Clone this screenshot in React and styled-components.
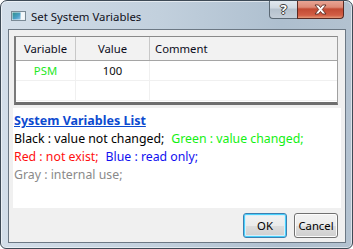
import React from "react";
import styled, { createGlobalStyle } from "styled-components";

const GlobalStyle = createGlobalStyle`
  html, body { margin: 0; padding: 0; background: #ffffff; }
  body { font-family: "Noto Sans", "DejaVu Sans", sans-serif; }
`;

const FONT = `"Noto Sans", "DejaVu Sans", sans-serif`;

const rows = [
  { name: "PSM", value: "100", comment: "", color: "#1ee81e" },
  { name: "", value: "", comment: "" },
];

export default function App() {
  return (
    <>
      <GlobalStyle />
      <Window>
        <TitleBar>
          <TitleLeft>
            <AppIcon />
            <Title>Set System Variables</Title>
          </TitleLeft>
          <Caption>
            <HelpButton>?</HelpButton>
            <CloseButton>
              <CloseGlyph />
            </CloseButton>
          </Caption>
        </TitleBar>
        <Client>
          <Grid>
            <HeaderRow>
              <HeadCell $w={60} $center>Variable</HeadCell>
              <HeadCell $w={74} $center>Value</HeadCell>
              <HeadCell $last>Comment</HeadCell>
            </HeaderRow>
            {rows.map((r, i) => (
              <BodyRow key={i}>
                <Cell $w={60} $center $color={r.color}>{r.name}</Cell>
                <Cell $w={74} $center>{r.value}</Cell>
                <Cell $last>{r.comment}</Cell>
              </BodyRow>
            ))}
          </Grid>
          <Legend>
            <LegendTitle>System Variables List</LegendTitle>
            <LegendLine>
              <Swatch $color="#000000">Black : value not changed;</Swatch>
              <Swatch $color="#12f012">Green : value changed;</Swatch>
            </LegendLine>
            <LegendLine>
              <Swatch $color="#ff1010">Red : not exist;</Swatch>
              <Swatch $color="#1010f0">Blue : read only;</Swatch>
            </LegendLine>
            <LegendLine>
              <Swatch $color="#8a8a8a">Gray : internal use;</Swatch>
            </LegendLine>
          </Legend>
          <ButtonRow>
            <DialogButton $default>OK</DialogButton>
            <DialogButton>Cancel</DialogButton>
          </ButtonRow>
        </Client>
      </Window>
    </>
  );
}

function AppIcon() {
  return (
    <IconBox width="15" height="10" viewBox="0 0 15 10">
      <defs>
        <linearGradient id="ic" x1="0" x2="1" y1="0" y2="1">
          <stop offset="0" stopColor="#2f8f8a" />
          <stop offset="0.6" stopColor="#4aa0c8" />
          <stop offset="1" stopColor="#8fc4e8" />
        </linearGradient>
      </defs>
      <rect x="0.5" y="0.5" width="14" height="9" fill="#e8eef2" stroke="#7a8a96" />
      <rect x="1.5" y="1.5" width="8" height="7" fill="url(#ic)" />
      <rect x="10" y="1.5" width="3.5" height="7" fill="#f4f8fb" />
    </IconBox>
  );
}

function CloseGlyph() {
  return (
    <svg width="13" height="11" viewBox="0 0 13 11">
      <path
        d="M1 1 H4.5 L6.5 3.5 L8.5 1 H12 L8.3 5.5 L12 10 H8.5 L6.5 7.5 L4.5 10 H1 L4.7 5.5 Z"
        fill="#ffffff"
        stroke="#5a2a22"
        strokeWidth="0.9"
        strokeLinejoin="round"
      />
    </svg>
  );
}

const Window = styled.div`
  width: 353px;
  height: 249px;
  box-sizing: border-box;
  border: 1px solid #3e4a56;
  border-radius: 7px 7px 6px 6px;
  background: linear-gradient(to right, #d3dee9 0%, #c2d0dd 45%, #aebfcf 80%, #b3c2d0 100%);
  box-shadow: inset 0 0 0 1px rgba(255, 255, 255, 0.55);
  display: flex;
  flex-direction: column;
  overflow: hidden;
`;

const TitleBar = styled.div`
  height: 28px;
  flex: none;
  display: flex;
  align-items: flex-start;
`;

const TitleLeft = styled.div`
  display: flex;
  align-items: center;
  height: 28px;
  padding-left: 10px;
  padding-top: 2px;
  box-sizing: border-box;
`;

const IconBox = styled.svg`
  display: block;
  margin-right: 5px;
`;

const Title = styled.span`
  font-family: ${FONT};
  font-size: 11.4px;
  color: #101020;
  white-space: nowrap;
`;

const Caption = styled.div`
  margin-left: auto;
  margin-right: 8px;
  display: flex;
  height: 19px;
  margin-top: -1px;
`;

const HelpButton = styled.div`
  width: 28px;
  height: 19px;
  box-sizing: border-box;
  border: 1px solid #5b6874;
  border-top: none;
  border-right: none;
  border-radius: 0 0 0 4px;
  background: linear-gradient(#e4eaf0 0%, #cfd8e1 45%, #b5c1cd 50%, #c4ced8 100%);
  display: flex;
  align-items: center;
  justify-content: center;
  font-family: ${FONT};
  font-weight: bold;
  font-size: 13px;
  color: #ffffff;
  text-shadow: 0 0 1px #333, 1px 0 0 #444, -1px 0 0 #444, 0 1px 0 #444, 0 -1px 0 #444;
`;

const CloseButton = styled.div`
  width: 47px;
  height: 19px;
  box-sizing: border-box;
  border: 1px solid #5a2a22;
  border-top: none;
  border-radius: 0 0 4px 0;
  background: linear-gradient(#e9a899 0%, #dd8a76 40%, #c24a33 50%, #d25e45 85%, #e49a7a 100%);
  display: flex;
  align-items: center;
  justify-content: center;
`;

const Client = styled.div`
  flex: 1;
  margin: 0 6px 5px 7px;
  border: 1px solid #6c7884;
  background: #f0f0f0;
  display: flex;
  flex-direction: column;
`;

const Grid = styled.div`
  margin: 6px 7px 0 5px;
  height: 69px;
  box-sizing: border-box;
  border-top: 1px solid #8a8a8a;
  border-left: 2px solid #7a7a7a;
  border-bottom: 3px solid #6e6e6e;
  border-right: 1px solid #a0a0a0;
  background: #ffffff;
  display: flex;
  flex-direction: column;
`;

const HeaderRow = styled.div`
  display: flex;
  height: 24px;
  flex: none;
  background: #f2f2f2;
  border-bottom: 1px solid #a5a5a5;
  box-sizing: border-box;
`;

const HeadCell = styled.div`
  ${(p) => (p.$w ? `width: ${p.$w}px; flex: none;` : "flex: 1;")}
  box-sizing: border-box;
  border-right: ${(p) => (p.$last ? "none" : "1px solid #c8c8c8")};
  display: flex;
  align-items: center;
  justify-content: ${(p) => (p.$center ? "center" : "flex-start")};
  padding-left: ${(p) => (p.$center ? "0" : "5px")};
  font-family: ${FONT};
  font-size: 11.3px;
  color: #0c0c1c;
`;

const BodyRow = styled.div`
  display: flex;
  height: 20px;
  flex: none;
  border-bottom: 1px solid #f0f0f0;
  box-sizing: border-box;
`;

const Cell = styled.div`
  ${(p) => (p.$w ? `width: ${p.$w}px; flex: none;` : "flex: 1;")}
  box-sizing: border-box;
  border-right: ${(p) => (p.$last ? "none" : "1px solid #f0f0f0")};
  display: flex;
  align-items: center;
  justify-content: ${(p) => (p.$center ? "center" : "flex-start")};
  font-family: ${FONT};
  font-size: 11.3px;
  color: ${(p) => p.$color || "#0c0c0c"};
`;

const Legend = styled.div`
  margin: 3px 4px 0 4px;
  height: 100px;
  box-sizing: border-box;
  background: #ffffff;
  padding: 4px 0 0 1px;
  display: flex;
  flex-direction: column;
`;

const LegendTitle = styled.div`
  font-family: ${FONT};
  font-size: 12.5px;
  font-weight: bold;
  line-height: 18px;
  color: #0c4ad0;
  text-decoration: underline;
  white-space: nowrap;
`;

const LegendLine = styled.div`
  display: flex;
  gap: 7px;
  font-family: ${FONT};
  font-size: 12.3px;
  line-height: 18px;
  white-space: nowrap;
`;

const Swatch = styled.span`
  color: ${(p) => p.$color};
`;

const ButtonRow = styled.div`
  display: flex;
  justify-content: flex-end;
  gap: 7px;
  margin: 5px 7px 0 0;
`;

const DialogButton = styled.div`
  width: 44px;
  height: 25px;
  box-sizing: border-box;
  border: 1px solid ${(p) => (p.$default ? "#3c7fb1" : "#707070")};
  border-radius: 3px;
  background: linear-gradient(#f2f2f2 0%, #ebebeb 50%, #dddddd 51%, #cfcfcf 100%);
  box-shadow: ${(p) =>
    p.$default ? "inset 0 0 0 1px #48d0fb, inset 0 0 0 2px #d8eef9" : "inset 0 0 0 1px #fcfcfc"};
  display: flex;
  align-items: center;
  justify-content: center;
  font-family: ${FONT};
  font-size: 11.3px;
  color: #000000;
`;
